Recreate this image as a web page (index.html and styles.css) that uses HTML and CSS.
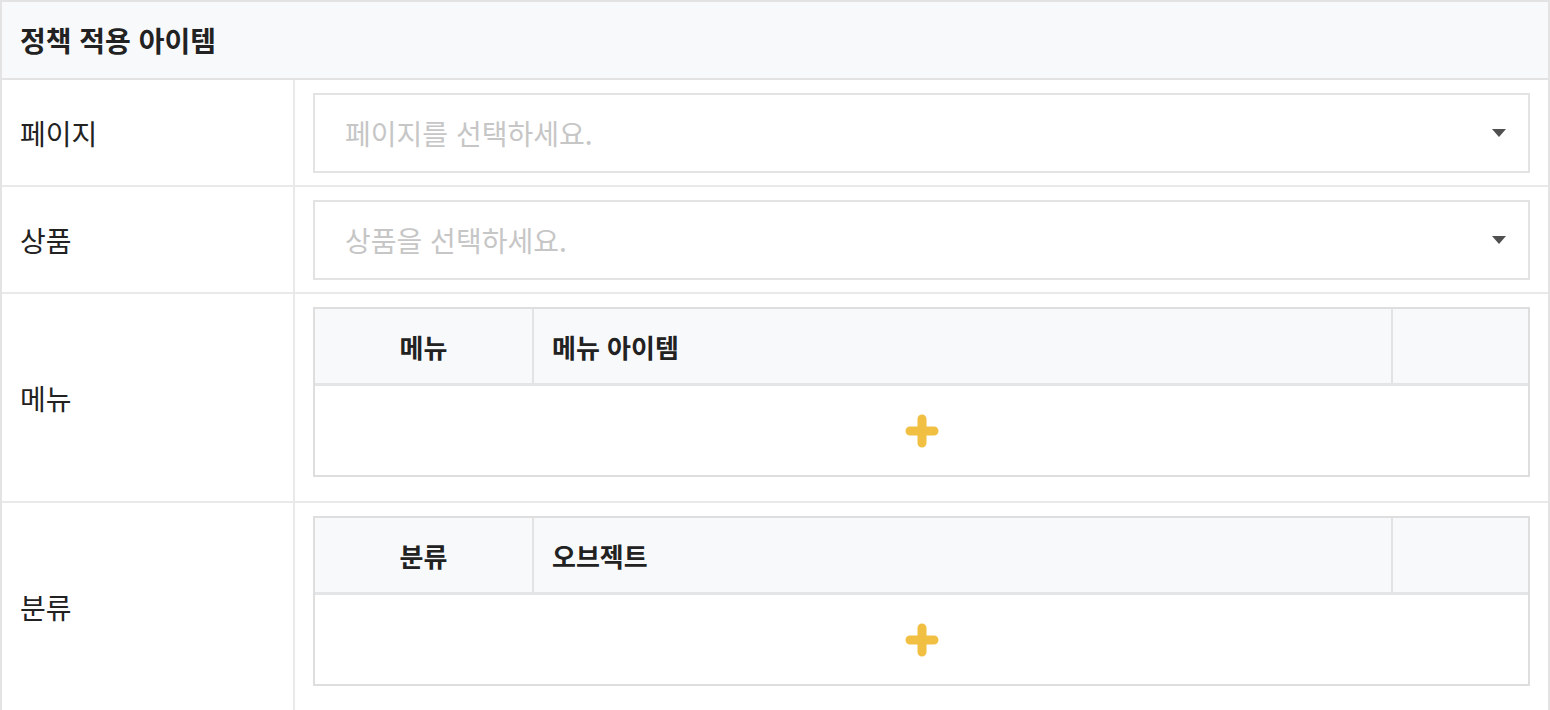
FILE: index.html
```html
<!DOCTYPE html>
<html lang="ko">
<head>
    <meta charset="UTF-8">
    <meta name="viewport" content="width=device-width, initial-scale=1.0">
    <title>정책 적용 아이템</title>
    <link rel="stylesheet" href="styles.css">
</head>
<body>
    <div class="panel">
        <div class="panel-title">정책 적용 아이템</div>

        <div class="form-row">
            <div class="form-label">페이지</div>
            <div class="form-field">
                <div class="select-box">
                    <span class="placeholder">페이지를 선택하세요.</span>
                    <span class="caret"></span>
                </div>
            </div>
        </div>

        <div class="form-row">
            <div class="form-label">상품</div>
            <div class="form-field">
                <div class="select-box">
                    <span class="placeholder">상품을 선택하세요.</span>
                    <span class="caret"></span>
                </div>
            </div>
        </div>

        <div class="form-row">
            <div class="form-label">메뉴</div>
            <div class="form-field">
                <div class="item-table">
                    <div class="item-head">
                        <div class="cell cell-first">메뉴</div>
                        <div class="cell cell-main">메뉴 아이템</div>
                        <div class="cell cell-last"></div>
                    </div>
                    <div class="item-body">
                        <button class="add-btn" type="button">
                            <svg width="34" height="34" viewBox="0 0 34 34">
                                <path d="M17 5v24M5 17h24" stroke="#f1c043" stroke-width="9" stroke-linecap="round"/>
                            </svg>
                        </button>
                    </div>
                </div>
            </div>
        </div>

        <div class="form-row">
            <div class="form-label">분류</div>
            <div class="form-field">
                <div class="item-table">
                    <div class="item-head">
                        <div class="cell cell-first">분류</div>
                        <div class="cell cell-main">오브젝트</div>
                        <div class="cell cell-last"></div>
                    </div>
                    <div class="item-body">
                        <button class="add-btn" type="button">
                            <svg width="34" height="34" viewBox="0 0 34 34">
                                <path d="M17 5v24M5 17h24" stroke="#f1c043" stroke-width="9" stroke-linecap="round"/>
                            </svg>
                        </button>
                    </div>
                </div>
            </div>
        </div>
    </div>
</body>
</html>
```

FILE: styles.css
```css
body {
    margin: 0;
    padding: 0;
    background-color: #fff;
    font-family: "Noto Sans CJK KR", "Noto Sans", sans-serif;
    color: #222;
}
.panel {
    width: 1550px;
    height: 710px;
    box-sizing: border-box;
    border: 2px solid #e3e3e3;
    border-bottom: none;
    overflow: hidden;
}
.panel-title {
    height: 76px;
    display: flex;
    align-items: center;
    padding-left: 18px;
    background-color: #f8f9fb;
    border-bottom: 2px solid #e3e3e3;
    font-size: 28px;
    font-weight: bold;
}
.form-row {
    display: grid;
    grid-template-columns: 293px 1fr;
    border-bottom: 2px solid #e9e9e9;
}
.form-label {
    display: flex;
    align-items: center;
    padding-left: 18px;
    border-right: 2px solid #e9e9e9;
    font-size: 28px;
}
.form-field {
    padding: 13px 18px 12px 18px;
}
.select-box {
    height: 76px;
    box-sizing: content-box;
    border: 2px solid #e3e3e3;
    display: flex;
    align-items: center;
    justify-content: space-between;
    padding: 0 22px 0 30px;
}
.placeholder {
    color: #c6c6c6;
    font-size: 28px;
}
.caret {
    width: 0;
    height: 0;
    border-left: 7px solid transparent;
    border-right: 7px solid transparent;
    border-top: 8px solid #505050;
}
.item-table {
    border: 2px solid #dedede;
    margin-bottom: 12px;
}
.item-head {
    display: grid;
    grid-template-columns: 219px 1fr 135px;
    height: 74px;
    background-color: #f8f9fb;
    border-bottom: 3px solid #e4e5e7;
}
.cell {
    display: flex;
    align-items: center;
    font-size: 26px;
    font-weight: bold;
}
.cell-first {
    justify-content: center;
    border-right: 2px solid #e3e3e3;
}
.cell-main {
    padding-left: 18px;
    border-right: 2px solid #e3e3e3;
}
.item-body {
    height: 89px;
    display: flex;
    align-items: center;
    justify-content: center;
}
.add-btn {
    border: none;
    background: none;
    padding: 0;
    cursor: pointer;
    display: flex;
}
```
